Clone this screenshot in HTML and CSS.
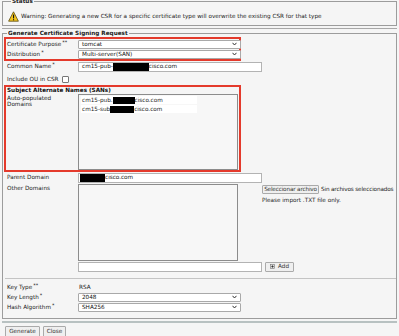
FILE: index.html
```html
<!DOCTYPE html>
<html lang="en">
<head>
  <meta charset="UTF-8">
  <meta name="viewport" content="width=device-width, initial-scale=1.0">
  <title>Generate Certificate Signing Request</title>
  <link rel="stylesheet" href="styles.css">
</head>
<body>
  <fieldset class="status">
    <legend>Status</legend>
    <div class="warn">
      <svg class="warn-icon" width="11" height="11" viewBox="0 0 11 11">
        <path d="M5.5 0.8 L10.4 10.2 L0.6 10.2 Z" fill="#f2c51d" stroke="#5a4a10" stroke-width="0.8" stroke-linejoin="round"/>
        <rect x="5" y="3.6" width="1.1" height="3.8" fill="#111"/>
        <rect x="5" y="8.2" width="1.1" height="1.1" fill="#111"/>
      </svg>
      <span>Warning: Generating a new CSR for a specific certificate type will overwrite the existing CSR for that type</span>
    </div>
  </fieldset>
  <div class="rule"></div>

  <fieldset class="csr">
    <legend>Generate Certificate Signing Request</legend>

    <div class="mark first">
      <div class="row tight">
        <label>Certificate Purpose<sup>**</sup></label>
        <div class="select">tomcat
          <svg width="5" height="4" viewBox="0 0 5 4"><path d="M0.5 0.8 L2.5 3 L4.5 0.8" fill="none" stroke="#333" stroke-width="1"/></svg>
        </div>
      </div>
      <div class="row tight">
        <label>Distribution<sup>*</sup></label>
        <div class="select">Multi-server(SAN)
          <svg width="5" height="4" viewBox="0 0 5 4"><path d="M0.5 0.8 L2.5 3 L4.5 0.8" fill="none" stroke="#333" stroke-width="1"/></svg>
        </div>
      </div>
    </div>

    <div class="row plain cn">
      <label>Common Name<sup>*</sup></label>
      <div class="input wide">cm15-pub-<span class="redact r-cn"></span>cisco.com</div>
    </div>
    <div class="row plain ou">
      <span class="ou-label">Include OU in CSR</span>
      <span class="check"></span>
    </div>

    <div class="mark sans">
      <div class="heading">Subject Alternate Names (SANs)</div>
      <div class="row top">
        <label class="two-line">Auto-populated<br>Domains</label>
        <div class="list">
          <div class="entry">cm15-pub.<span class="redact r-san"></span>cisco.com</div>
          <div class="entry">cm15-sub<span class="redact r-san2"></span>cisco.com</div>
        </div>
      </div>
    </div>

    <div class="row plain parent">
      <label>Parent Domain</label>
      <div class="input wide"><span class="redact r-parent"></span>cisco.com</div>
    </div>

    <div class="row plain top others">
      <label>Other Domains</label>
      <div class="textarea"></div>
      <div class="file">
        <div class="file-line"><span class="btn file-btn">Seleccionar archivo</span><span class="file-name">Sin archivos seleccionados</span></div>
        <div class="hint">Please import .TXT file only.</div>
      </div>
    </div>

    <div class="row plain add-row">
      <label></label>
      <div class="input wide"></div>
      <span class="btn add-btn">
        <svg width="5" height="5" viewBox="0 0 5 5"><rect x="0.5" y="0.5" width="4" height="4" fill="#ddd" stroke="#777" stroke-width="0.6"/><path d="M2.5 1.3 V3.7 M1.3 2.5 H3.7" stroke="#222" stroke-width="0.7"/></svg>
        Add
      </span>
    </div>

    <div class="sep"></div>

    <div class="row plain key-type">
      <label>Key Type<sup>**</sup></label>
      <span class="value">RSA</span>
    </div>
    <div class="row plain tight">
      <label>Key Length<sup>*</sup></label>
      <div class="select">2048
        <svg width="5" height="4" viewBox="0 0 5 4"><path d="M0.5 0.8 L2.5 3 L4.5 0.8" fill="none" stroke="#333" stroke-width="1"/></svg>
      </div>
    </div>
    <div class="row plain tight">
      <label>Hash Algorithm<sup>*</sup></label>
      <div class="select">SHA256
        <svg width="5" height="4" viewBox="0 0 5 4"><path d="M0.5 0.8 L2.5 3 L4.5 0.8" fill="none" stroke="#333" stroke-width="1"/></svg>
      </div>
    </div>
  </fieldset>

  <div class="bottom-rule"></div>
  <div class="actions">
    <span class="btn gen">Generate</span>
    <span class="btn close">Close</span>
  </div>
</body>
</html>
```

FILE: styles.css
```css
body {
  margin: 0;
  background-color: #f5f5f5;
  color: #222222;
  font-family: 'DejaVu Sans', Verdana, sans-serif;
  font-size: 5.7px;
  line-height: 7px;
  overflow: hidden;
}

fieldset {
  margin: 0 2px;
  padding: 0;
  border: 1px solid #9c9c9c;
  min-inline-size: 0;
}

legend {
  font-weight: bold;
  padding: 0 1px;
  margin-left: 3px;
  line-height: 8px;
}

sup {
  font-size: 5px;
  line-height: 0;
  vertical-align: 2px;
  margin-left: 1px;
}

/* status box */
.status {
  margin-top: -3px;
  padding: 5px 0 3px 5px;
}

.warn {
  display: flex;
  align-items: center;
  gap: 2px;
  height: 12px;
}

.rule {
  margin: 2px 2px 0;
  border-top: 1px solid #a8a8a8;
}

/* CSR form */
.csr {
  padding: 0 0 6px 1px;
}

.mark {
  width: 233px;
  border: 2px solid #e43a2c;
}

.row {
  display: flex;
  align-items: center;
  padding-left: 1px;
}

.row.plain {
  padding-left: 3px;
}

.row label {
  width: 71px;
  flex: none;
}

.row.tight {
  height: 10px;
}

.row.top {
  align-items: flex-start;
}

.select {
  width: 155px;
  height: 7px;
  padding: 0 3px 0 3px;
  border: 1px solid #a9a9a9;
  border-radius: 1px;
  background-color: #ffffff;
  display: flex;
  align-items: center;
  justify-content: space-between;
  color: #111111;
  flex: none;
}

.input {
  height: 8px;
  width: 179px;
  padding-left: 3px;
  border: 1px solid #b3b3b3;
  background-color: #ffffff;
  display: flex;
  align-items: center;
  color: #111111;
  flex: none;
}

.redact {
  display: inline-block;
  height: 8px;
  background-color: #000000;
}

.r-cn { width: 36px; }
.r-parent { width: 25px; margin-left: -2px; }
.r-san { width: 22px; height: 7px; }
.r-san2 { width: 24px; height: 7px; }

.cn {
  height: 11px;
}

.ou {
  height: 12px;
  padding-top: 1px;
}

.check {
  width: 5px;
  height: 5px;
  margin-left: 3px;
  border: 1px solid #777777;
  border-radius: 1px;
  background-color: #ffffff;
}

.heading {
  font-weight: bold;
  padding-left: 1px;
  height: 7px;
  line-height: 7px;
  color: #111111;
}

.two-line {
  margin-top: 1px;
  line-height: 6px;
}

.list {
  width: 158px;
  height: 74px;
  border: 1px solid #8c8c8c;
  background-color: #f7f7f7;
  flex: none;
}

.entry {
  width: 115px;
  height: 8px;
  margin: 1px 0 0 2px;
  padding-left: 1px;
  background-color: #ffffff;
  display: flex;
  align-items: center;
}

.parent {
  height: 11px;
}

.others .textarea {
  width: 158px;
  height: 75px;
  margin-top: 1px;
  border: 1px solid #8c8c8c;
  background-color: #f7f7f7;
  flex: none;
}

.others label {
  margin-top: 2px;
}

.file {
  margin-left: 24px;
  margin-top: 2px;
  flex: none;
}

.file-line {
  display: flex;
  align-items: center;
  gap: 2px;
  white-space: nowrap;
}

.file-name {
  letter-spacing: -0.15px;
}

.hint {
  margin-top: 3px;
}

.btn {
  display: inline-flex;
  align-items: center;
  justify-content: center;
  border: 1px solid #aaaaaa;
  border-radius: 1px;
  background-color: #efefef;
  color: #333333;
  white-space: nowrap;
}

.file-btn {
  height: 7px;
  width: 55px;
  letter-spacing: -0.15px;
}

.add-row {
  height: 11px;
}

.add-btn {
  margin-left: 3px;
  height: 8px;
  width: 27px;
  gap: 3px;
}

.sep {
  margin: 6px 0 0 1px;
  border-top: 1px solid #c4c4c4;
}

.key-type {
  height: 10px;
  margin-top: 3px;
}

.value {
  margin-left: 1px;
}

.bottom-rule {
  margin: 2px 2px 0;
  height: 2px;
  background-color: #b8c1c1;
}

.actions {
  display: flex;
  gap: 3px;
  padding: 3px 0 0 5px;
}

.actions .btn {
  height: 9px;
}

.gen { width: 33px; }
.close { width: 21px; }
```
